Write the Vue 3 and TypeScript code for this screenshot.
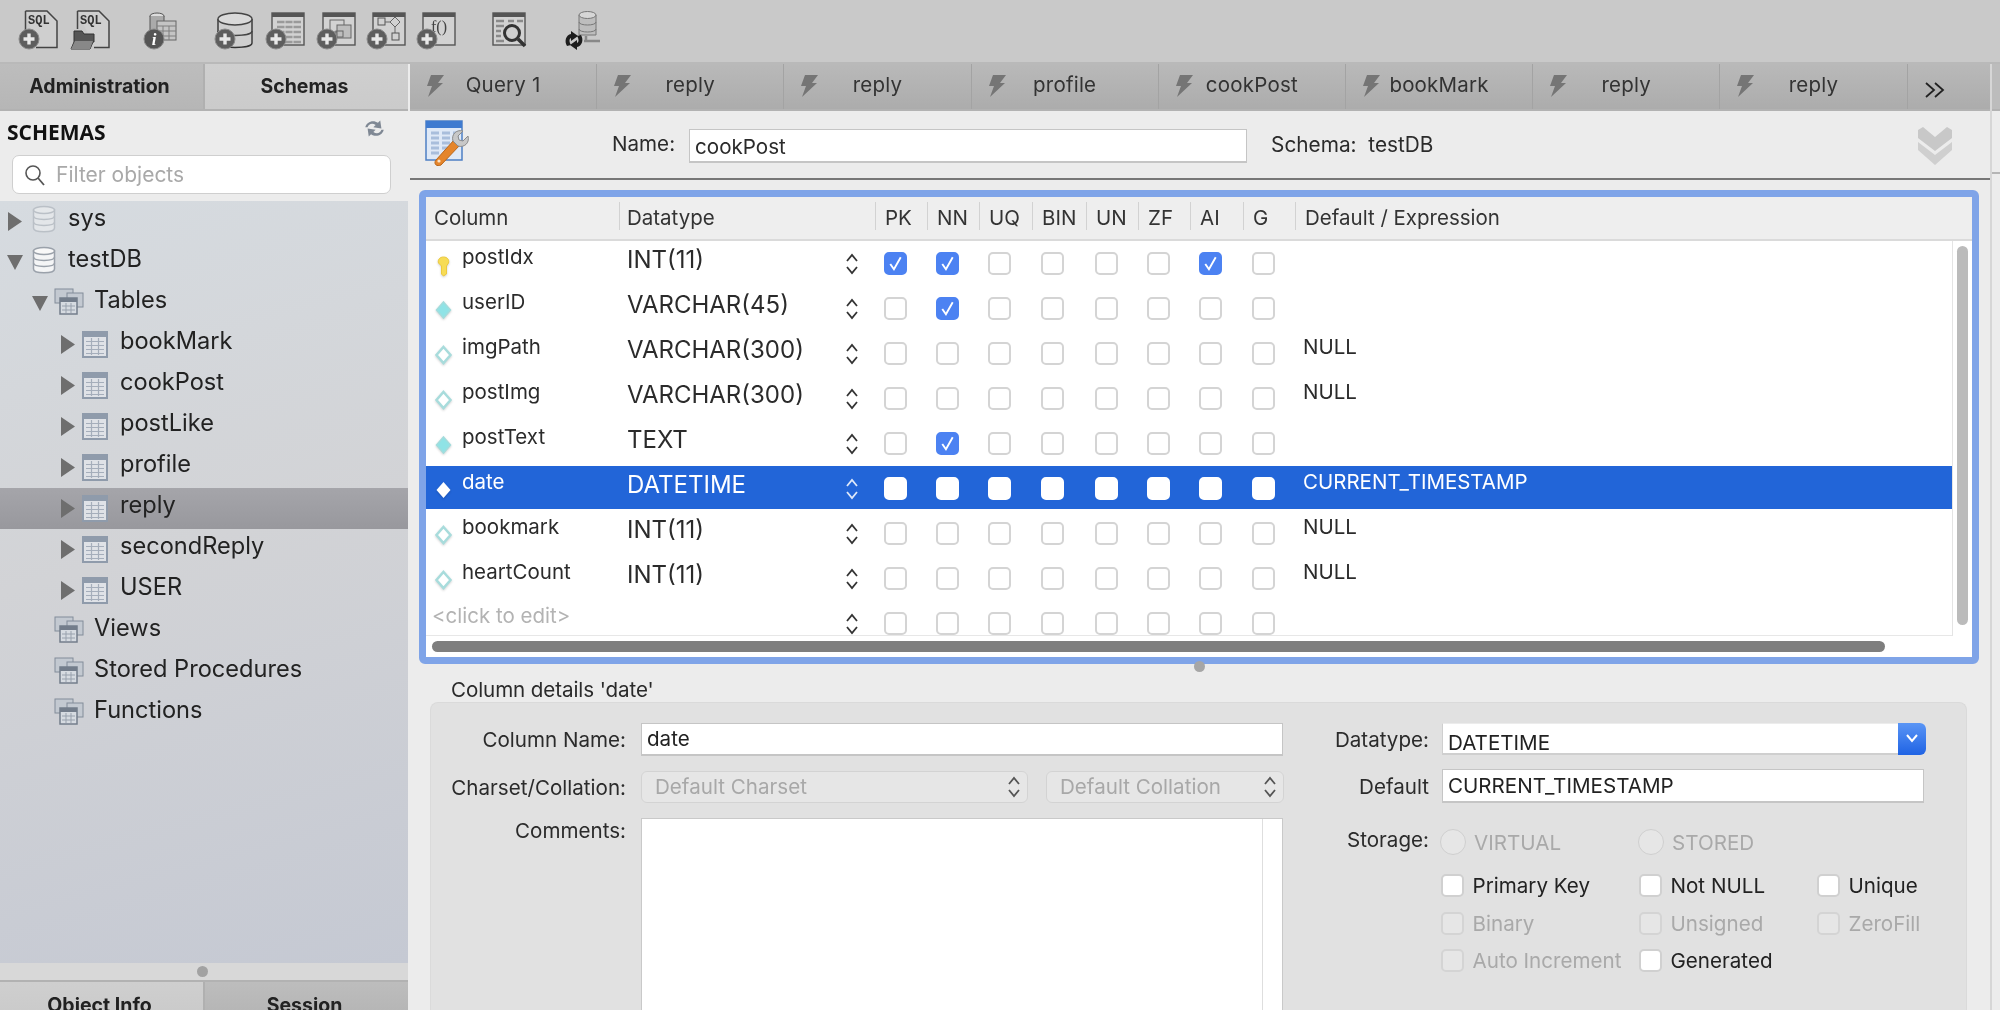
<script setup lang="ts">
type Item = { label: string; level: string; kind: string; arrow: string; selected?: boolean }
const tree: Item[] = [
  { label: 'sys', level: 'l0', kind: 'db-faded', arrow: 'right' },
  { label: 'testDB', level: 'l0', kind: 'db', arrow: 'down' },
  { label: 'Tables', level: 'l1', kind: 'group', arrow: 'down' },
  { label: 'bookMark', level: 'l2', kind: 'table', arrow: 'right' },
  { label: 'cookPost', level: 'l2', kind: 'table', arrow: 'right' },
  { label: 'postLike', level: 'l2', kind: 'table', arrow: 'right' },
  { label: 'profile', level: 'l2', kind: 'table', arrow: 'right' },
  { label: 'reply', level: 'l2', kind: 'table', arrow: 'right', selected: true },
  { label: 'secondReply', level: 'l2', kind: 'table', arrow: 'right' },
  { label: 'USER', level: 'l2', kind: 'table', arrow: 'right' },
  { label: 'Views', level: 'l1', kind: 'group', arrow: 'none' },
  { label: 'Stored Procedures', level: 'l1', kind: 'group', arrow: 'none' },
  { label: 'Functions', level: 'l1', kind: 'group', arrow: 'none' },
]
const tabs = ['Query 1', 'reply', 'reply', 'profile', 'cookPost', 'bookMark', 'reply', 'reply']
const flags = ['PK', 'NN', 'UQ', 'BIN', 'UN', 'ZF', 'AI', 'G']
type Row = { name: string; type: string; on: string[]; def: string; icon: string; sel?: boolean; ghost?: boolean }
const rows: Row[] = [
  { name: 'postIdx', type: 'INT(11)', on: ['PK', 'NN', 'AI'], def: '', icon: 'key' },
  { name: 'userID', type: 'VARCHAR(45)', on: ['NN'], def: '', icon: 'fill' },
  { name: 'imgPath', type: 'VARCHAR(300)', on: [], def: 'NULL', icon: 'open' },
  { name: 'postImg', type: 'VARCHAR(300)', on: [], def: 'NULL', icon: 'open' },
  { name: 'postText', type: 'TEXT', on: ['NN'], def: '', icon: 'fill' },
  { name: 'date', type: 'DATETIME', on: [], def: 'CURRENT_TIMESTAMP', icon: 'white', sel: true },
  { name: 'bookmark', type: 'INT(11)', on: [], def: 'NULL', icon: 'open' },
  { name: 'heartCount', type: 'INT(11)', on: [], def: 'NULL', icon: 'open' },
  { name: '<click to edit>', type: '', on: [], def: '', icon: 'none', ghost: true },
]
const opts = [
  { label: 'Primary Key', off: false }, { label: 'Not NULL', off: false }, { label: 'Unique', off: false },
  { label: 'Binary', off: true }, { label: 'Unsigned', off: true }, { label: 'ZeroFill', off: true },
  { label: 'Auto Increment', off: true }, { label: 'Generated', off: false },
]
</script>

<template>
  <div class="app">
    <svg class="defs" aria-hidden="true">
      <symbol id="plus" viewBox="0 0 22 22">
        <circle cx="11" cy="11" r="10" fill="#5e5e5e" stroke="#8a8a8a" />
        <path d="M11 5.5v11M5.5 11h11" stroke="#e8e8e8" stroke-width="3.4" />
      </symbol>
      <symbol id="win" viewBox="0 0 34 34">
        <rect x="1" y="1" width="32" height="32" fill="#d2d2d2" stroke="#555" stroke-width="1.4" />
        <rect x="1" y="1" width="32" height="4" fill="#555" />
      </symbol>
      <symbol id="bolt" viewBox="0 0 20 24">
        <path d="M6 1h13l-6 8h5L3 23l4-11H2z" fill="#757575" />
      </symbol>
      <symbol id="tbl" viewBox="0 0 26 28">
        <rect x="1" y="1" width="24" height="25" fill="#dfe2e7" stroke="#8f9bab" stroke-width="2" />
        <rect x="1" y="1" width="24" height="5" fill="#8f9bab" />
        <path d="M4 10.500h18M4 14.500h18M4 18.500h18M4 22.500h18M9.500 7v17M16.500 7v17" stroke="#a5aebb" stroke-width="1.200" fill="none" />
      </symbol>
      <symbol id="group" viewBox="0 0 30 28">
        <rect x="1" y="1" width="18" height="14" fill="#c3c9d1" stroke="#828c99" />
        <rect x="13" y="5" width="16" height="14" fill="#c3c9d1" stroke="#828c99" />
        <rect x="6" y="10" width="17" height="16" fill="#d6dbe1" stroke="#737d8b" stroke-width="1.500" />
        <rect x="6" y="10" width="17" height="4" fill="#737d8b" />
        <path d="M8 18h13M8 22h13M12 15v10M17 15v10" stroke="#98a1ad" />
      </symbol>
      <symbol id="dbs" viewBox="0 0 24 28">
        <path d="M1.500 5v18c0 5 21 5 21 0V5z" fill="#f4f5f6" stroke="#9aa1aa" stroke-width="1.500" />
        <ellipse cx="12" cy="5" rx="10.500" ry="3.500" fill="#f8f8f8" stroke="#9aa1aa" stroke-width="1.500" />
        <path d="M1.500 11c0 4.500 21 4.500 21 0M1.500 17c0 4.500 21 4.500 21 0" fill="none" stroke="#9aa1aa" stroke-width="1.500" />
      </symbol>
    </svg>

    <header class="toolbar">
      <svg class="tool" viewBox="0 0 44 46"><path d="M7.500 3H29l10 10v26.500H18" fill="#cfcfcf" stroke="#444" stroke-width="1.500" /><path d="M7.500 3v20" stroke="#444" stroke-width="1.500" /><text x="10" y="16" class="sql">SQL</text><use href="#plus" x="0" y="20" width="22" height="22" /></svg>
      <svg class="tool" viewBox="0 0 44 46"><path d="M7.500 3H29l10 10v26.500H24M7.500 3v18" fill="#cfcfcf" stroke="#444" stroke-width="1.500" /><text x="10" y="16" class="sql">SQL</text><path d="M4 23h8l2 3h10v8h-1l-3 7H1l3-7z" fill="#555" stroke="#333" /><path d="M1 41l4-8h18l-3 8z" fill="#888" /></svg>
      <svg class="tool gap-info" viewBox="0 0 44 46"><ellipse cx="14" cy="8" rx="7" ry="3" fill="#ddd" stroke="#555" /><path d="M7 8v14h14V8" fill="#aaa" stroke="#555" /><rect x="14" y="13" width="19" height="19" fill="#c4c4c4" stroke="#666" /><path d="M14 18h19M14 23h19M14 28h19M20 18v14M26 18v14" stroke="#7e7e7e" /><circle cx="11" cy="31" r="10" fill="#555" stroke="#8a8a8a" /><text x="11" y="37" class="info-i">i</text></svg>
      <svg class="tool gap-db" viewBox="0 0 44 46"><path d="M4 11v24c0 6 34 6 34 0V11" fill="#cfcfcf" stroke="#333" stroke-width="1.400" /><ellipse cx="21" cy="11" rx="17" ry="6" fill="#d9d9d9" stroke="#444" stroke-width="1.400" /><path d="M4 23c0 6 34 6 34 0" fill="none" stroke="#444" stroke-width="1.400" /><use href="#plus" x="0" y="20" width="22" height="22" /></svg>
      <svg class="tool" viewBox="0 0 44 46"><use href="#win" x="6" y="4" width="34" height="34" /><path d="M12 14h24M12 19h24M12 24h24M12 29h24M12 34h24" stroke="#9a9a9a" stroke-width="2.500" /><path d="M20 11v25M28 11v25" stroke="#d2d2d2" /><use href="#plus" x="0" y="20" width="22" height="22" /></svg>
      <svg class="tool" viewBox="0 0 44 46"><use href="#win" x="6" y="4" width="34" height="34" /><rect x="14" y="12" width="14" height="12" fill="none" stroke="#666" /><rect x="21" y="17" width="14" height="13" fill="#bdbdbd" stroke="#666" /><rect x="20" y="23" width="7" height="6" fill="none" stroke="#666" /><use href="#plus" x="0" y="20" width="22" height="22" /></svg>
      <svg class="tool tight" viewBox="0 0 44 46"><use href="#win" x="6" y="4" width="34" height="34" /><rect x="12" y="10" width="7" height="7" fill="none" stroke="#555" /><path d="M29 9l5 5-5 5-5-5zM19 14h5M29 19v6" fill="none" stroke="#666" /><rect x="26" y="25" width="7" height="7" fill="none" stroke="#555" /><use href="#plus" x="0" y="20" width="22" height="22" /></svg>
      <svg class="tool tight" viewBox="0 0 44 46"><use href="#win" x="6" y="4" width="34" height="34" /><text x="15" y="24" class="fn">f()</text><use href="#plus" x="0" y="20" width="22" height="22" /></svg>
      <svg class="tool gap-search" viewBox="0 0 44 46"><use href="#win" x="2" y="4" width="34" height="34" /><path d="M6 13h8M18 13h6M27 13h6M6 18h8M6 23h5M6 28h5M6 33h8" stroke="#8a8a8a" stroke-width="2.500" /><circle cx="22" cy="25" r="7.500" fill="#cfcfcf" stroke="#333" stroke-width="3" /><path d="M28 31l7 7" stroke="#333" stroke-width="3.500" /></svg>
      <svg class="tool gap-sync" viewBox="0 0 44 46"><path d="M17 7v20h17V7" fill="#bdbdbd" stroke="#777" /><ellipse cx="25.500" cy="7" rx="8.500" ry="3.500" fill="#d6d6d6" stroke="#777" /><path d="M17 14c0 4 17 4 17 0M17 21c0 4 17 4 17 0" fill="none" stroke="#777" /><path d="M24 28v5M22 33h16" stroke="#888" stroke-width="2.500" /><path d="M5 38C2 33 4 27 9 26v-3l7 5-7 5v-3c-2 1-2 4 0 7zM19 27c3 5 1 11-4 12v3l-7-5 7-5v3c2-1 2-4 0-7z" fill="#1d1d1d" /></svg>
    </header>

    <div class="body">
      <aside class="sidebar">
        <nav class="side-tabs">
          <div class="side-tab dim">Administration</div>
          <div class="side-tab lit">Schemas</div>
        </nav>
        <div class="side-head">
          <div class="side-title">
            <span>SCHEMAS</span>
            <svg class="refresh" viewBox="0 0 20 18"><path d="M2 8c1-5 7-7 11-4l2-2 1 7-7-1 2-2c-3-2-6-1-7 2zM18 10c-1 5-7 7-11 4l-2 2-1-7 7 1-2 2c3 2 6 1 7-2z" fill="#7f8894" /></svg>
          </div>
          <div class="filter">
            <svg class="lens" viewBox="0 0 22 22"><circle cx="9" cy="9" r="7" fill="none" stroke="#555" stroke-width="1.600" /><path d="M14 14l6 7" stroke="#555" stroke-width="1.800" /></svg>
            <span>Filter objects</span>
          </div>
        </div>
        <ul class="tree">
          <li v-for="item in tree" :key="item.label" class="node" :class="[item.level, { picked: item.selected }]">
            <span class="arrow" :class="item.arrow"></span>
            <svg v-if="item.kind === 'table'" class="ico-t"><use href="#tbl" /></svg>
            <svg v-else-if="item.kind === 'group'" class="ico-g"><use href="#group" /></svg>
            <svg v-else class="ico-d" :class="{ faded: item.kind === 'db-faded' }"><use href="#dbs" /></svg>
            <span class="node-label">{{ item.label }}</span>
          </li>
        </ul>
        <div class="side-split"><i></i></div>
        <nav class="side-tabs bottom">
          <div class="side-tab lit">Object Info</div>
          <div class="side-tab dim">Session</div>
        </nav>
      </aside>

      <main class="main">
        <nav class="tabs">
          <div v-for="(t, i) in tabs" :key="i" class="tab">
            <svg class="bolt"><use href="#bolt" /></svg>
            <span>{{ t }}</span>
          </div>
          <div class="more">
            <svg viewBox="0 0 22 18" class="more-ico"><path d="M2 2l8 7-8 7M11 2l8 7-8 7" fill="none" stroke="#222" stroke-width="1.800" /></svg>
          </div>
        </nav>

        <section class="namebar">
          <svg class="editor-ico" viewBox="0 0 46 46">
            <rect x="1" y="1" width="36" height="39" fill="#dfe9f7" stroke="#4d7fc4" stroke-width="1.500" />
            <rect x="1" y="1" width="36" height="7" fill="#3f7bd0" />
            <path d="M6 13h8M6 18h8M6 23h8M6 28h8M6 33h8M17 13h8M17 18h8M17 23h8M17 28h6M28 13h6M28 18h6M28 23h3" stroke="#a9bedc" stroke-width="3" />
            <path d="M11 40l18-20 6 5-19 20c-4 2-8-1-5-5z" fill="#e5852b" stroke="#b9661a" />
            <circle cx="14" cy="41" r="1.600" fill="#fbe3c8" />
            <path d="M28 21c-2-6 3-12 10-10l-5 5 1 4 4 1 5-5c2 7-4 12-10 10z" fill="#c8c8c8" stroke="#8b8b8b" />
          </svg>
          <label class="name-label">Name:</label>
          <div class="name-input">cookPost</div>
          <span class="schema">Schema:&nbsp; testDB</span>
          <svg class="collapse" viewBox="0 0 36 38"><path d="M1 3l5-3 12 10L30 0l5 3v8L18 24 1 11z" fill="#c8c8c8" /><path d="M1 15l17 13 17-13v8L18 38 1 23z" fill="#cfcfcf" /></svg>
        </section>

        <section class="editor">
          <div class="frame">
            <div class="grid head">
              <div class="hc first">Column</div>
              <div class="hc dt">Datatype</div>
              <div v-for="f in flags" :key="f" class="hc fl">{{ f }}</div>
              <div class="hc defh">Default / Expression</div>
            </div>
            <div class="mid">
              <div class="rows">
                <div v-for="r in rows" :key="r.name" class="grid row" :class="{ sel: r.sel }">
                  <div class="c-name" :class="{ ghost: r.ghost }">
                    <svg v-if="r.icon === 'key'" class="rico" viewBox="0 0 18 24"><path d="M9 4c4 0 6 3 5 6l-2 3v8l-3 2-2-2v-8L4 10C3 7 5 4 9 4z" fill="#f7dc55" stroke="#ecc93f" /></svg>
                    <svg v-else-if="r.icon !== 'none'" class="rico" :class="r.icon" viewBox="0 0 18 24"><path d="M9 4l7 8-7 8-7-8z" /></svg>
                    <span>{{ r.name }}</span>
                  </div>
                  <div class="c-type"><span>{{ r.type }}</span>
                    <svg class="updown" viewBox="0 0 14 22"><path d="M2 8l5-6 5 6M2 14l5 6 5-6" fill="none" stroke-width="1.800" /></svg>
                  </div>
                  <div v-for="f in flags" :key="f" class="c-flag">
                    <span class="box" :class="{ on: r.on.includes(f) }">
                      <svg v-if="r.on.includes(f)" viewBox="0 0 22 22"><path d="M6 11.500l3.500 5L16 5" fill="none" stroke="#fff" stroke-width="1.800" /></svg>
                    </span>
                  </div>
                  <div class="c-def">{{ r.def }}</div>
                </div>
              </div>
              <div class="vbar"><i></i></div>
            </div>
            <div class="hbar"><i></i></div>
          </div>
        </section>
        <div class="split-dot"><i></i></div>

        <div class="details-title">Column details 'date'</div>
        <section class="group">
          <div class="col-left">
            <div class="field">
              <label>Column Name:</label>
              <div class="input grow">date</div>
            </div>
            <div class="field">
              <label>Charset/Collation:</label>
              <div class="dsel w-a">Default Charset
                <svg viewBox="0 0 14 22"><path d="M2 8l5-6 5 6M2 14l5 6 5-6" fill="none" stroke="#555" stroke-width="1.800" /></svg>
              </div>
              <div class="dsel w-b">Default Collation
                <svg viewBox="0 0 14 22"><path d="M2 8l5-6 5 6M2 14l5 6 5-6" fill="none" stroke="#555" stroke-width="1.800" /></svg>
              </div>
            </div>
            <div class="field top">
              <label class="cmt">Comments:</label>
              <div class="textarea"><i></i></div>
            </div>
          </div>
          <div class="col-right">
            <div class="rfield">
              <label>Datatype:</label>
              <div class="combo"><span>DATETIME</span>
                <b><svg viewBox="0 0 14 10"><path d="M2 2l5 6 5-6" fill="none" stroke="#fff" stroke-width="2" /></svg></b>
              </div>
            </div>
            <div class="rfield second">
              <label>Default</label>
              <div class="input def">CURRENT_TIMESTAMP</div>
            </div>
            <div class="rfield storage">
              <label>Storage:</label>
              <div class="radios">
                <span class="radio"><i></i>VIRTUAL</span>
                <span class="radio"><i></i>STORED</span>
              </div>
            </div>
            <div class="options">
              <span v-for="o in opts" :key="o.label" class="opt" :class="{ off: o.off }"><i></i>{{ o.label }}</span>
            </div>
          </div>
        </section>
      </main>
      <div class="edge">
        <div class="edge-tab"></div>
        <div class="edge-name"></div>
      </div>
    </div>
  </div>
</template>

<style>
html, body { margin: 0; background: #ececec; overflow: hidden; }
</style>

<style scoped>
* { box-sizing: border-box; }
.app { width: 2000px; height: 1010px; overflow: hidden; display: flex; flex-direction: column; background: #ececec; color: #2b2b2b; font-family: Inter, "Liberation Sans", sans-serif; font-size: 20.600px; filter: blur(0.45px); }
.defs { position: absolute; width: 0; height: 0; }
.toolbar { height: 64px; flex: none; background: #c9c9c9; border-bottom: 2px solid #b9b9b9; display: flex; padding: 8px 0 0 18px; }
.tool { width: 44px; height: 46px; flex: none; margin-left: 7px; }
.tool:first-child { margin-left: 0; }
.tool:nth-child(2) { margin-left: 8px; }
.tight { margin-left: 6px; }
.gap-info { margin-left: 29px; }
.gap-db { margin-left: 27px; }
.gap-search { margin-left: 30px; }
.gap-sync { margin-left: 28px; }
.sql { font: 700 12px "Liberation Mono", monospace; fill: #333; }
.fn { font: 400 16px "Liberation Serif", serif; fill: #444; }
.info-i { font: italic 700 17px "Liberation Serif", serif; fill: #fff; text-anchor: middle; }
.body { flex: 1; display: flex; min-height: 0; }
.sidebar { width: 408px; flex: none; display: flex; flex-direction: column; margin-right: 2px; background: #ececec; }
.side-tabs { height: 47px; flex: none; display: flex; border-bottom: 2px solid #b2b2b2; }
.side-tabs.bottom { height: 30px; border-bottom: 0; border-top: 2px solid #b2b2b2; }
.side-tab { width: 203px; display: flex; align-items: center; justify-content: center; font-weight: 700; font-size: 19.500px; color: #222; padding: 0 4px 1px 0; }
.side-tab + .side-tab { width: 205px; border-left: 2px solid #b0b0b0; }
.bottom .side-tab { align-items: flex-start; padding-top: 11px; }
.dim { background: linear-gradient(#bdbdbd, #b6b6b6); }
.lit { background: linear-gradient(#cfcfcf, #cbcbcb); }
.side-head { height: 90px; flex: none; padding: 0 17px 0 12px; background: #ececec; }
.side-title { height: 44px; display: flex; justify-content: space-between; align-items: center; margin-left: -5px; padding-bottom: 3px; }
.side-title span { font: 700 21px "Open Sans", sans-serif; color: #111; }
.refresh { width: 23px; height: 21px; margin-right: 5px; margin-top: -6px; }
.filter { height: 39px; background: #fff; border: 1px solid #cfcfcf; border-radius: 7px; display: flex; align-items: center; gap: 10px; padding-left: 11px; color: #a9a9a9; font-size: 21px; }
.lens { width: 22px; height: 22px; }
.tree { list-style: none; margin: 0; padding: 0; flex: 1; min-height: 0; background: linear-gradient(165deg, #d6dbe0 0%, #d2d3d6 45%, #c5c9d3 100%); }
.node { height: 41px; display: flex; align-items: center; font-size: 23.600px; color: #222; position: relative; }
.node.picked { background: linear-gradient(#a5a5aa, #98989d); }
.node-label { padding-bottom: 9px; white-space: nowrap; }
.arrow { flex: none; width: 15px; height: 15px; }
.arrow.right { clip-path: polygon(0 0, 100% 50%, 0 100%); background: #6e6e6e; width: 14px; height: 19px; margin-right: 1px; }
.arrow.down { clip-path: polygon(0 0, 100% 0, 50% 100%); background: #6e6e6e; width: 16px; margin-left: -1px; }
.l0 { padding-left: 8px; }
.l1 { padding-left: 33px; }
.l2 { padding-left: 61px; }
.l0 .ico-d { margin: -5px 12px 0 9px; width: 24px; height: 28px; }
.ico-d.faded { opacity: .45; }
.ico-g { width: 30px; height: 28px; margin: -4px 10px 0 6px; flex: none; }
.ico-t { width: 26px; height: 28px; margin: 0 12px 0 6px; flex: none; }
.side-split { height: 17px; flex: none; background: #d8d8d8; display: flex; align-items: center; justify-content: center; }
.side-split i { width: 11px; height: 11px; border-radius: 50%; background: #a2a2a2; margin-right: 4px; }
.main { width: 1580px; flex: none; display: flex; flex-direction: column; background: #ececec; min-height: 0; }
.tabs { height: 47px; flex: none; display: flex; border-bottom: 2px solid #b2b2b2; background: linear-gradient(#b9b9b9, #acacac); }
.tab { width: 187.200px; position: relative; display: flex; align-items: center; justify-content: center; border-right: 1px solid #a3a3a3; font-size: 20.500px; color: #333; padding: 0 0 5px; letter-spacing: .2px; }
.bolt { position: absolute; left: 15px; top: 10px; width: 20px; height: 24px; }
.more { flex: 1; display: flex; align-items: center; padding: 6px 0 0 16px; }
.more-ico { width: 22px; height: 18px; }
.namebar { height: 69px; flex: none; display: flex; align-items: center; border-bottom: 2px solid #777; position: relative; padding-bottom: 4px; }
.editor-ico { width: 46px; height: 46px; margin-left: 15px; flex: none; }
.name-label { margin-left: 141px; padding-top: 2px; }
.name-input { width: 558px; height: 34px; margin: 6px 0 0 14px; background: #fff; border: 1px solid #c5c5c5; border-bottom-width: 2px; padding: 5px 5px 0; line-height: 24px; }
.schema { margin-left: 24px; padding-top: 3px; font-size: 20.800px; }
.collapse { position: absolute; right: 37px; top: 16px; width: 36px; height: 38px; }
.editor { flex: none; padding: 10px 11px 0 9px; }
.frame { height: 474px; border: 7px solid #7fa4e8; border-radius: 6px; background: #fff; display: flex; flex-direction: column; overflow: hidden; }
.grid { display: grid; grid-template-columns: 194px 256px 52px 52px 53px 54px 52px 52px 53px 52px 1fr; }
.head { height: 44px; flex: none; background: #eee; border-bottom: 2px solid #dadada; align-items: stretch; padding-bottom: 1px; }
.hc { display: flex; align-items: center; padding-left: 9px; position: relative; font-size: 20.500px; color: #333; }
.hc::after { content: ""; position: absolute; right: 0; top: 5px; bottom: 8px; width: 1px; background: #d2d2d2; }
.hc.first { padding-left: 8px; }
.hc.dt { padding-left: 7px; }
.hc.defh::after { display: none; }
.mid { flex: 1; min-height: 0; display: flex; }
.rows { width: 1526px; flex: none; overflow: hidden; border-bottom: 1px solid #e7e7e7; }
.row { height: 45px; align-items: center; color: #2b2b2b; }
.row.sel { color: #fff; background: linear-gradient(#2265d8 0 43px, #fff 43px); }
.c-name { display: flex; align-items: center; padding-left: 8px; font-size: 20.500px; height: 100%; }
.c-name span { padding-bottom: 14px; }
.c-name.ghost { padding-left: 6px; color: #b3b3b3; font-size: 20.500px; }
.c-name.ghost span { padding-bottom: 16px; }
.rico { width: 19px; height: 24px; margin-right: 9px; flex: none; margin-top: 3px; filter: drop-shadow(0 1px 1px rgba(0,0,0,.18)); }
.rico.fill path { fill: #8fe3e6; stroke: #a3dcdc; stroke-width: 1.500; }
.rico.open path { fill: #fff; stroke: #a8dcdc; stroke-width: 2.500; }
.rico.white path { fill: #fff; }
.c-type { display: flex; align-items: center; justify-content: space-between; padding: 0 17px 0 7px; font-size: 24px; height: 100%; }
.c-type span { padding-bottom: 8px; }
.updown { width: 14px; height: 22px; stroke: #333; flex: none; }
.sel .updown { stroke: #fff; stroke-opacity: .85; }
.c-flag { padding-left: 8px; display: flex; align-items: center; height: 100%; }
.box { width: 23px; height: 23px; border-radius: 5px; border: 2px solid #d4d4d4; background: #fff; display: block; }
.box.on { background: #4c82f2; border-color: #4c82f2; }
.box svg { display: block; width: 23px; height: 23px; margin: -2px; }
.sel .box { border-color: #fff; }
.c-def { padding-left: 7px; font-size: 20.500px; padding-bottom: 14px; }
.vbar { flex: 1; border-left: 1px solid #e4e4e4; padding: 5px 4px 0 4px; }
.vbar i { display: block; width: 11px; height: 379px; background: #bbb; border-radius: 6px; }
.hbar { height: 21px; flex: none; padding: 5px 0 0 6px; }
.hbar i { display: block; width: 1453px; height: 11px; background: #7e7e7e; border-radius: 6px; }
.split-dot { height: 5px; flex: none; display: flex; justify-content: center; overflow: visible; padding-right: 2px; }
.split-dot i { width: 11px; height: 11px; border-radius: 50%; background: #a6a6a6; flex: none; margin-top: -3px; }
.details-title { height: 33px; flex: none; padding: 9px 0 0 41px; line-height: 24px; letter-spacing: -.1px; }
.group { margin: 0 23px 0 20px; flex: 1; min-height: 0; background: #e1e1e1; border: 1px solid #dadada; border-bottom: 0; border-radius: 8px 8px 0 0; display: flex; overflow: hidden; padding-top: 20px; }
.col-left { width: 853px; flex: none; }
.field { display: flex; align-items: center; gap: 15px; margin-bottom: 15px; }
.field.top { align-items: flex-start; margin: 0; }
.field label { width: 195px; text-align: right; flex: none; white-space: nowrap; }
.input { background: #fff; border: 1px solid #c5c5c5; border-bottom-width: 2px; height: 33px; padding: 0 5px; line-height: 30px; color: #222; }
.grow { width: 642px; }
.dsel { height: 32px; background: #e6e6e6; border: 1px solid #d3d3d3; border-radius: 6px; color: #a8a8a8; display: flex; align-items: center; justify-content: space-between; padding: 0 6px 2px 13px; }
.dsel svg { width: 14px; height: 22px; margin-top: 2px; }
.w-a { width: 387px; }
.w-b { width: 238px; margin-left: 3px; }
.textarea { width: 642px; height: 400px; background: #fff; border: 1px solid #c9c9c9; position: relative; }
.textarea i { position: absolute; right: 19px; top: 0; bottom: 0; width: 1px; background: #dedede; }
.col-right { flex: 1; }
.rfield { display: flex; gap: 13px; align-items: center; }
.rfield label { width: 145px; text-align: right; flex: none; }
.combo { width: 484px; height: 32px; background: #fff; border-bottom: 2px solid #cfcfcf; border-top: 1px solid #ececec; border-left: 1px solid #cfcfcf; border-radius: 0 6px 6px 0; display: flex; justify-content: space-between; padding-left: 5px; line-height: 38px; color: #222; position: relative; }
.combo b { width: 28px; height: 32px; margin-top: -1px; background: linear-gradient(#5a95f5, #1f63e4); border-radius: 0 6px 6px 0; display: flex; align-items: center; justify-content: center; padding-bottom: 3px; }
.combo svg { width: 14px; height: 10px; }
.rfield.second { margin-top: 14px; }
.input.def { width: 482px; height: 34px; line-height: 32px; padding-left: 5px; }
.storage { margin-top: 24px; align-items: flex-start; }
.radios { display: flex; margin-top: -1px; }
.radio { width: 198px; display: flex; align-items: center; gap: 8px; color: #a9a9a9; margin-left: -2px; padding-top: 3px; margin-right: 2px; }
.radio i { width: 26px; height: 26px; border-radius: 50%; border: 1.500px solid #cfcfcf; background: #e6e6e6; flex: none; }
.options { margin: 19px 0 0 157px; display: grid; grid-template-columns: 198px 178px 110px; row-gap: 14.500px; }
.opt { display: flex; align-items: center; gap: 8.500px; height: 23px; white-space: nowrap; color: #222; }
.opt i { width: 23px; height: 23px; border-radius: 5px; border: 2px solid #d0d0d0; background: #fff; flex: none; }
.opt.off { color: #a9a9a9; }
.opt.off i { background: #e6e6e6; border-color: #d4d4d4; }
.edge { width: 10px; flex: none; display: flex; flex-direction: column; border-left: 2px solid #d6d6d6; }
.edge-tab { height: 47px; background: #bcbcbc; border-bottom: 2px solid #b2b2b2; }
.edge-name { height: 63px; border-bottom: 2px solid #b5b5b5; }
</style>
